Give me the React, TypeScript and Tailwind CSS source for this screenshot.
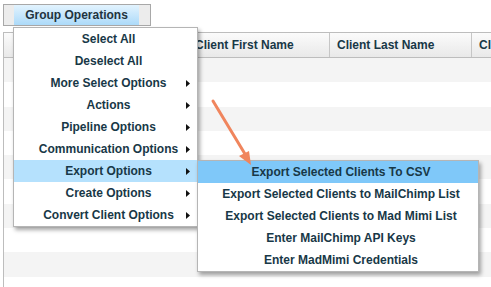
const menuItems = [
  { label: 'Select All', sub: false },
  { label: 'Deselect All', sub: false },
  { label: 'More Select Options', sub: true },
  { label: 'Actions', sub: true },
  { label: 'Pipeline Options', sub: true },
  { label: 'Communication Options', sub: true },
  { label: 'Export Options', sub: true, active: true },
  { label: 'Create Options', sub: true },
  { label: 'Convert Client Options', sub: true },
]

const exportItems = [
  'Export Selected Clients To CSV',
  'Export Selected Clients to MailChimp List',
  'Export Selected Clients to Mad Mimi List',
  'Enter MailChimp API Keys',
  'Enter MadMimi Credentials',
]

// small black triangle used for submenus
function Caret() {
  return (
    <svg className="absolute right-[7px] top-[8px]" width="4" height="7" viewBox="0 0 4 7">
      <path d="M0 0 L4 3.5 L0 7 Z" fill="#111" />
    </svg>
  )
}

export default function App() {
  const rows = [0, 1, 2, 3, 4, 5, 6, 7, 8]

  return (
    <div className="relative w-[491px] h-[287px] overflow-hidden bg-white font-['Liberation_Sans',Arial,sans-serif] text-[12px] font-bold text-[#183847]">
      {/* Group Operations button */}
      <div className="pt-[4px] pl-[3px]">
        <div className="flex h-[22px] w-[148px] border border-[#a8a8a8] bg-[#ececec] pl-[10px] pr-[11px]">
          <div className="flex h-full flex-1 items-center justify-center bg-gradient-to-b from-[#e2f3fe] to-[#acdaf9] text-[#1f3440]">
            Group Operations
          </div>
        </div>
      </div>

      {/* table */}
      <div className="mt-[6px] ml-[3px] h-[300px] w-[600px] border-l border-[#bdbdbd]">
        <div className="flex h-[26px] border-y border-[#bdbdbd] bg-gradient-to-b from-[#fbfbfb] to-[#e9e9e9] whitespace-nowrap">
          <div className="w-[183px] shrink-0" />
          <div className="flex w-[142px] shrink-0 items-center border-l border-[#c6c6c6] pl-[7px]">Client First Name</div>
          <div className="flex w-[142px] shrink-0 items-center border-l border-[#c6c6c6] pl-[7px]">Client Last Name</div>
          <div className="flex w-[130px] shrink-0 items-center border-l border-[#c6c6c6] pl-[7px]">Client Email</div>
        </div>
        {rows.map((r) => (
          <div key={r} className={r % 2 === 0 ? 'h-[24.3px] bg-[#f4f4f4]' : 'h-[24.3px] bg-white'} />
        ))}
      </div>

      {/* main menu */}
      <div className="absolute left-[13px] top-[27px] w-[185px] border border-[#b5b5b5] bg-white shadow-[2px_3px_4px_rgba(0,0,0,0.35)]">
        {menuItems.map((item) => (
          <div
            key={item.label}
            className={`relative flex h-[22px] items-center justify-center pl-[6px] whitespace-nowrap ${item.active ? 'bg-[#b5e1fd]' : ''}`}
          >
            {item.label}
            {item.sub && <Caret />}
          </div>
        ))}
      </div>

      {/* export submenu */}
      <div className="absolute left-[197px] top-[160px] w-[282px] border border-[#b5b5b5] bg-white shadow-[2px_3px_4px_rgba(0,0,0,0.35)]">
        {exportItems.map((label, i) => (
          <div
            key={label}
            className={`flex h-[22px] items-center justify-center pl-[6px] whitespace-nowrap ${i === 0 ? 'bg-[#7fc8f9]' : ''}`}
          >
            {label}
          </div>
        ))}
      </div>

      {/* annotation arrow */}
      <svg className="absolute left-0 top-0" width="491" height="287" viewBox="0 0 491 287">
        <line x1="213" y1="101" x2="245" y2="154" stroke="#f0855d" strokeWidth="3" strokeLinecap="round" />
        <path d="M251 165 L239 156 L249 151 Z" fill="#f0855d" />
      </svg>
    </div>
  )
}
